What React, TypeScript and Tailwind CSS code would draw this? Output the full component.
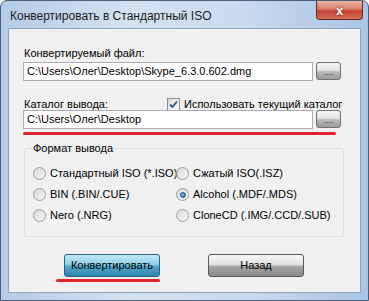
const font = { fontFamily: '"Liberation Sans", Arial, sans-serif' };

function Radio({ checked, label }: { checked?: boolean; label: string }) {
  return (
    <div className="flex items-center gap-[4px] whitespace-nowrap">
      <span className="flex h-[13px] w-[13px] shrink-0 items-center justify-center rounded-full border border-[#9a9b9b] bg-[linear-gradient(135deg,#d8d8d8,#f7f7f7)]">
        {checked && (
          <span className="h-[6px] w-[6px] rounded-full border border-[#1d4f8c] bg-[radial-gradient(circle_at_35%_35%,#8fc2f2,#1e5fa8)]" />
        )}
      </span>
      <span className="text-[11px] leading-[15px] text-black">{label}</span>
    </div>
  );
}

function BrowseButton() {
  return (
    <div className="flex h-[18px] w-[25px] items-end justify-center rounded-[3px] border border-[#707070] bg-[linear-gradient(180deg,#f4f4f4,#e2e2e2_45%,#b8b8b8_55%,#9c9c9c)] pb-[2px] text-[9px] leading-[9px] text-[#222]">
      ....
    </div>
  );
}

function TextBox({ value }: { value: string }) {
  return (
    <div className="flex h-[19px] w-[290px] items-center border border-[#abadb3] bg-white pl-[3px] text-[11px] text-black">
      {value}
    </div>
  );
}

export default function App() {
  return (
    <div
      style={font}
      className="flex h-[301px] w-[369px] flex-col rounded-t-[7px] border border-[#4b5f78] bg-[linear-gradient(90deg,#b3cbe6,#d4e2f2_35%,#c9dbef_65%,#aac5e4)] px-[7px] pb-[7px]"
    >
      {/* title bar */}
      <div className="flex h-[27px] items-start justify-between">
        <span className="mt-[8px] pl-[2px] text-[12px] leading-[15px] text-[#1a1a1a]">
          Конвертировать в Стандартный ISO
        </span>
        <div className="mr-[-2px] flex h-[19px] w-[47px] items-center justify-center rounded-b-[4px] border border-t-0 border-[#6e2b26] bg-[linear-gradient(180deg,#eab3a2,#d9806b_45%,#c4402f_55%,#d2705a)] text-[13px] font-bold leading-none text-white [text-shadow:0_0_2px_#5a1d18]">
          x
        </div>
      </div>

      {/* client area */}
      <div className="flex flex-1 flex-col border border-[#8ea3bd] bg-[#f0f0f0] pl-[14px] pt-[17px]">
        <span className="pl-[1px] text-[11px] leading-[15px] text-black">Конвертируемый файл:</span>
        <div className="mt-[1px] flex items-start gap-[3px]">
          <TextBox value="C:\Users\Олег\Desktop\Skype_6.3.0.602.dmg" />
          <BrowseButton />
        </div>

        <div className="mt-[16px] flex h-[15px] items-center">
          <span className="w-[144px] pl-[1px] text-[11px] leading-[15px] text-black">Каталог вывода:</span>
          <span className="flex h-[13px] w-[13px] items-center justify-center border border-[#8e8f8f] bg-[linear-gradient(135deg,#dcdcdc,#fbfbfb)]">
            <svg width="9" height="9" viewBox="0 0 9 9">
              <path d="M1 4.5 L3.5 7 L8 1.5" fill="none" stroke="#2b4f8f" strokeWidth="1.8" />
            </svg>
          </span>
          <span className="ml-[4px] text-[11px] leading-[15px] text-black">Использовать текущий каталог</span>
        </div>
        <div className="mt-[-2px] flex items-start gap-[3px]">
          <TextBox value="C:\Users\Олег\Desktop" />
          <BrowseButton />
        </div>
        <div className="mt-[3px] h-[3px] w-[313px] rounded-full bg-[#e0262c]" />

        {/* output format group */}
        <div className="relative ml-[1px] mt-[13px] h-[89px] w-[320px] rounded-[3px] border border-[#d5dfe5] pl-[8px] pt-[17px]">
          <span className="absolute left-[8px] top-[-8px] bg-[#f0f0f0] pr-[2px] text-[11px] leading-[15px] text-black">
            Формат вывода
          </span>
          <div className="grid grid-cols-[143px_1fr] gap-y-[6px]">
            <Radio label="Стандартный ISO (*.ISO)" />
            <Radio label="Сжатый ISO(.ISZ)" />
            <Radio label="BIN (.BIN/.CUE)" />
            <Radio checked label="Alcohol (.MDF/.MDS)" />
            <Radio label="Nero (.NRG)" />
            <Radio label="CloneCD (.IMG/.CCD/.SUB)" />
          </div>
        </div>

        {/* buttons */}
        <div className="mt-[17px] flex gap-[48px] pl-[33px]">
          <div className="flex flex-col items-end">
            <div className="flex h-[23px] w-[96px] items-center justify-center rounded-[3px] border border-[#2c6285] bg-[linear-gradient(180deg,#c2e8f7,#8fd0ea_45%,#4fa7cb_55%,#2f86ab)] text-[11px] text-black">
              Конвертировать
            </div>
            <div className="mt-[2px] h-[3px] w-[104px] rounded-full bg-[#e0262c]" />
          </div>
          <div className="flex h-[23px] w-[96px] items-center justify-center rounded-[3px] border border-[#5a5a5a] bg-[linear-gradient(180deg,#f8f8f8,#e0e0e0_45%,#a6a6a6_55%,#8a8a8a)] text-[11px] text-black">
            Назад
          </div>
        </div>
      </div>
    </div>
  );
}
